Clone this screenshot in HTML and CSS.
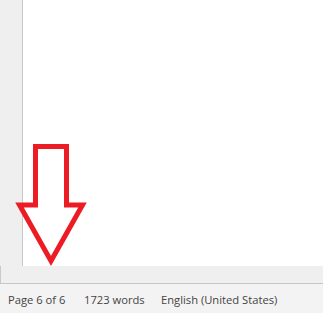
FILE: index.html
```html
<!DOCTYPE html>
<html lang="en">
<head>
  <meta charset="UTF-8" />
  <title>Document</title>
  <link rel="stylesheet" href="styles.css">
</head>
<body>
  <div class="window">
    <div class="workspace">
      <div class="gutter"></div>
      <div class="page"></div>
    </div>
    <div class="hstrip"></div>
    <div class="statusbar">
      <span class="page-count">Page 6 of 6</span>
      <span class="word-count">1723 words</span>
      <span class="language">English (United States)</span>
    </div>

    <!-- annotation arrow -->
    <svg class="arrow" width="327" height="313" viewBox="0 0 327 313">
      <polygon points="35.5,146.5 66.5,146.5 66.5,205 82.5,205 51,261 19.5,205 35.5,205"
               fill="none" stroke="#ed1c24" stroke-width="5" stroke-linejoin="miter" />
    </svg>
  </div>
</body>
</html>
```

FILE: styles.css
```css
body {
  margin: 0;
  font-family: 'Open Sans', 'Noto Sans', sans-serif;
  background: #ffffff;
}

.window {
  position: relative;
  width: 327px;
  height: 313px;
  display: flex;
  flex-direction: column;
  overflow: hidden;
}

.workspace {
  display: flex;
  height: 266px;
}

.gutter {
  width: 22px;
  background: #efefef;
  border-right: 1px solid #c9c9c9;
}

.page {
  flex: 1;
  background: #ffffff;
}

/* grey strip under the page */
.hstrip {
  height: 17px;
  margin-right: 4px;
  background: #efefef;
  border-bottom: 1px solid #c6c6c6;
  box-shadow: inset 23px 0 0 -22px #c9c9c9;
}

.statusbar {
  flex: 1;
  margin-right: 4px;
  background: #f3f3f3;
  display: flex;
  align-items: center;
  padding-left: 8px;
  padding-top: 1px;
  font-size: 11.2px;
  color: #444444;
}

.page-count {
  width: 76px;
}

.word-count {
  width: 77px;
}

.arrow {
  position: absolute;
  top: 0;
  left: 0;
}
```
